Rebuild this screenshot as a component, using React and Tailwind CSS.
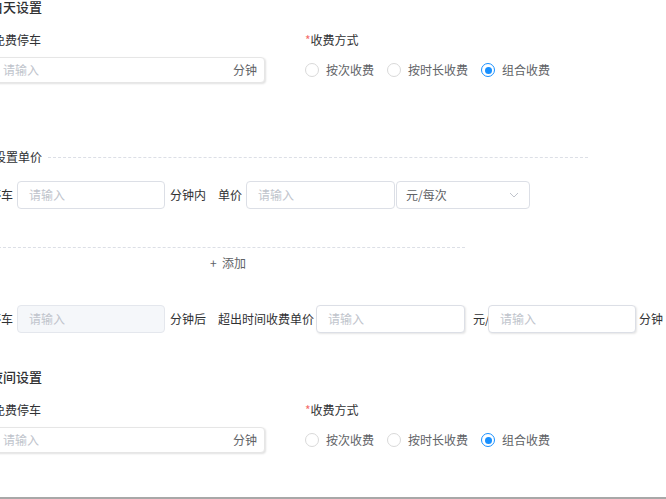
import React from 'react'

const font = { fontFamily: '"Noto Sans CJK SC", "Noto Sans", sans-serif' }

function Radio({ label, checked }) {
  return (
    <label className="flex items-center gap-[7px] text-[12px] leading-[14px] text-[#606266]">
      {checked ? (
        <span className="flex h-[14px] w-[14px] items-center justify-center rounded-full border border-[#1890ff] bg-white">
          <span className="h-[7px] w-[7px] rounded-full bg-[#1890ff]" />
        </span>
      ) : (
        <span className="h-[14px] w-[14px] rounded-full border border-[#d9d9d9] bg-white" />
      )}
      <span>{label}</span>
    </label>
  )
}

function TextInput({ className = '', disabled, suffix }) {
  return (
    <div
      className={`flex items-center rounded-[4px] border px-[11px] text-[12px] ${
        disabled ? 'border-[#e4e7ed] bg-[#f5f7fa]' : 'border-[#dcdfe6] bg-white'
      } ${className}`}>
      <span className="flex-1 text-[#c0c4cc]">请输入</span>
      {suffix && <span className="text-[#606266]">{suffix}</span>}
    </div>
  )
}

function TimeSection({ title }) {
  return (
    <div>
      <div className="pl-[2px] text-[13px] font-medium leading-[13px] text-[#303133]">
        {title}
      </div>
      <div className="mt-[21px] flex">
        <div className="w-[317px]">
          <div className="pl-[5px] text-[12px] leading-[12px] text-[#303133]">
            免费停车
          </div>
          <TextInput
            className="ml-[3px] mt-[11px] h-[26px] w-[274px] border-[#e6e6e6] pl-[11px] pr-[7px] shadow-[1px_1px_2px_rgba(0,0,0,0.12)]"
            suffix="分钟"
          />
        </div>
        <div>
          <div className="text-[12px] leading-[12px] text-[#303133]">
            <span className="text-[#f56c6c]">*</span>收费方式
          </div>
          <div className="mt-[17px] flex gap-[13px]">
            <Radio label="按次收费" />
            <Radio label="按时长收费" />
            <Radio label="组合收费" checked />
          </div>
        </div>
      </div>
    </div>
  )
}

export default function App() {
  return (
    <div className="relative h-[499px] w-[666px] overflow-hidden bg-white" style={font}>
      <div className="-ml-[12px]">
        <TimeSection title="白天设置" />

        <div className="mt-[68px] flex w-[600px] items-center pl-[6px]">
          <span className="text-[12px] leading-[12px] text-[#303133]">设置单价</span>
          <div className="ml-[6px] flex-1 border-t border-dashed border-[#dcdfe6]" />
        </div>

        <div className="mt-[18px] flex h-[28px] items-center pl-[1px] text-[12px] text-[#303133]">
          <span>停车</span>
          <TextInput className="ml-[4px] h-[28px] w-[148px]" />
          <span className="ml-[5px]">分钟内</span>
          <span className="ml-[12px]">单价</span>
          <TextInput className="ml-[4px] h-[28px] w-[149px]" />
          <div className="ml-[1px] flex h-[28px] w-[134px] items-center rounded-[4px] border border-[#dcdfe6] pl-[9px] pr-[10px] text-[#606266]">
            <span className="flex-1">元/每次</span>
            <svg width="10" height="6" viewBox="0 0 10 6" fill="none">
              <path d="M1 1l4 4 4-4" stroke="#c0c4cc" strokeWidth="1" />
            </svg>
          </div>
        </div>

        <div className="mt-[38px] w-[477px] border-t border-dashed border-[#dcdfe6]" />
        <div className="mt-[9px] flex w-[477px] justify-center text-[12px] leading-[12px] text-[#606266]">
          <span className="pl-[3px]">+&nbsp;&nbsp;添加</span>
        </div>

        <div className="mt-[36px] flex h-[28px] items-center pl-[1px] text-[12px] text-[#303133]">
          <span>停车</span>
          <TextInput className="ml-[4px] h-[28px] w-[148px]" disabled />
          <span className="ml-[5px]">分钟后</span>
          <span className="ml-[12px]">超出时间收费单价</span>
          <TextInput className="ml-[2px] h-[28px] w-[149px] shadow-[1px_1px_2px_rgba(0,0,0,0.1)]" />
          <span className="ml-[8px] w-[15px] overflow-hidden whitespace-nowrap">元/</span>
          <TextInput className="h-[28px] w-[148px] shadow-[1px_1px_2px_rgba(0,0,0,0.1)]" />
          <span className="ml-[3px]">分钟</span>
        </div>

        <div className="mt-[37px]">
          <TimeSection title="夜间设置" />
        </div>
      </div>
      <div className="absolute bottom-0 left-0 h-[2px] w-full bg-[#a8a8a8]" />
    </div>
  )
}
